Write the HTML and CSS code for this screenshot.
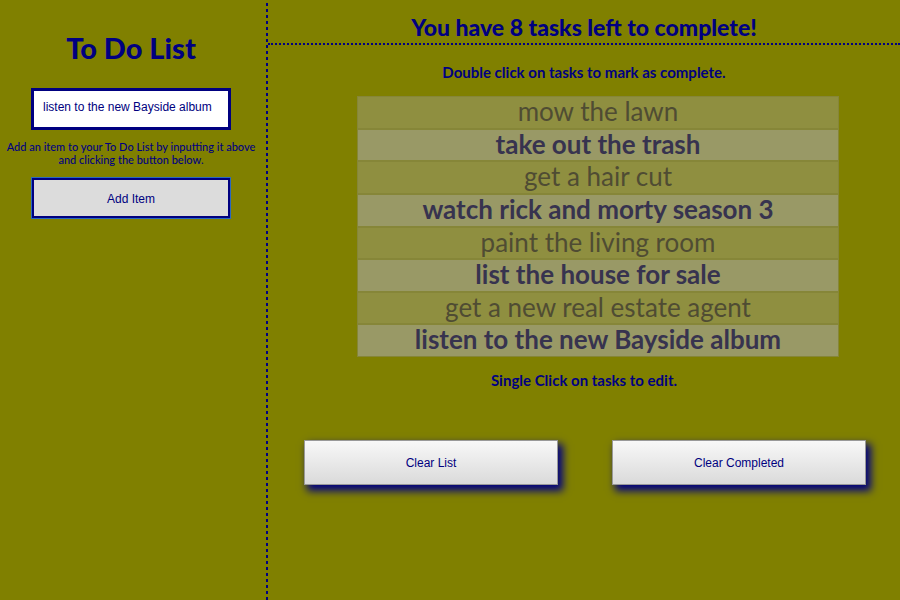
FILE: index.html
```html
<!DOCTYPE html>
<html lang="en">
<head>
<meta charset="utf-8">
<title>To Do List</title>
<link rel="stylesheet" href="styles.css">
</head>
<body>
<div class="app">
  <aside class="sidebar">
    <h1>To Do List</h1>
    <form class="add-form">
      <input class="field" id="item" type="text" value="listen to the new Bayside album">
      <label class="hint" for="item">Add an item to your To Do List by inputting it above and clicking the button below.</label>
      <button class="field add" type="button">Add Item</button>
    </form>
  </aside>
  <main class="main">
    <h2>You have 8 tasks left to complete!</h2>
    <p class="note">Double click on tasks to mark as complete.</p>
    <ul class="tasks">
      <li class="done">mow the lawn</li>
      <li>take out the trash</li>
      <li class="done">get a hair cut</li>
      <li>watch rick and morty season 3</li>
      <li class="done">paint the living room</li>
      <li>list the house for sale</li>
      <li class="done">get a new real estate agent</li>
      <li>listen to the new Bayside album</li>
    </ul>
    <p class="note">Single Click on tasks to edit.</p>
    <div class="actions">
      <button class="clear" type="button">Clear List</button>
      <button class="clear" type="button">Clear Completed</button>
    </div>
  </main>
</div>
</body>
</html>
```
FILE: styles.css
```css
* {
  box-sizing: border-box;
}

body {
  margin: 0;
  background: #808000;
  color: navy;
  font-family: Lato, sans-serif;
  font-weight: 700;
}

.app {
  display: grid;
  grid-template-columns: 268fr 632fr;
  min-height: 100vh;
}

.sidebar {
  padding: 28px 6px 0 0;
  background: linear-gradient(transparent 50%, navy 50%) right top / 2px 6px repeat-y;
  text-align: center;
}

h1 {
  margin: 0 0 20px;
  font-size: 29px;
  font-weight: 900;
  line-height: 40px;
}

.add-form {
  display: flex;
  flex-direction: column;
  align-items: center;
}

.field {
  width: 200px;
  max-width: 90%;
  height: 42px;
  border: 3px solid navy;
  border-radius: 0;
  padding: 0 9px 4px;
  background: #fff;
  color: navy;
  font-family: "Liberation Sans", sans-serif;
  font-size: 12px;
}

.hint {
  margin: 10px 4px 11px;
  font-size: 11px;
  font-weight: 500;
  line-height: 13px;
}

.add {
  padding: 2px 9px 0;
  background: #dcdcdc;
  outline: 1px solid #2a68c0;
  outline-offset: -1px;
}

h2 {
  margin: 0 0 15px;
  padding-top: 12px;
  border-bottom: 2px dotted navy;
  font-size: 23px;
  font-weight: 900;
  line-height: 31px;
  text-align: center;
}

.note {
  margin: 0;
  font-size: 15px;
  line-height: 24px;
  text-align: center;
}

.tasks {
  display: grid;
  grid-auto-rows: 1fr;
  min-height: 261px;
  margin: 12px 61px 11px 89px;
  padding: 0;
  list-style: none;
}

.tasks li {
  border: 1px solid #868638;
  background: #999966;
  color: #37334f;
  font-size: 26px;
  line-height: 29px;
  text-align: center;
}

.tasks .done {
  background: #8f8f40;
  color: #4f4c33;
  font-weight: 400;
}

.actions {
  display: flex;
  justify-content: space-between;
  gap: 54px;
  margin: 48px 34px 0 36px;
}

.clear {
  flex: 1;
  height: 45px;
  border: 1px solid #999;
  padding: 0;
  background: linear-gradient(#f8f8f8, #dadada);
  box-shadow: 4px 5px 8px 1px navy;
  color: navy;
  font-family: "Liberation Sans", sans-serif;
  font-size: 12px;
}
```
